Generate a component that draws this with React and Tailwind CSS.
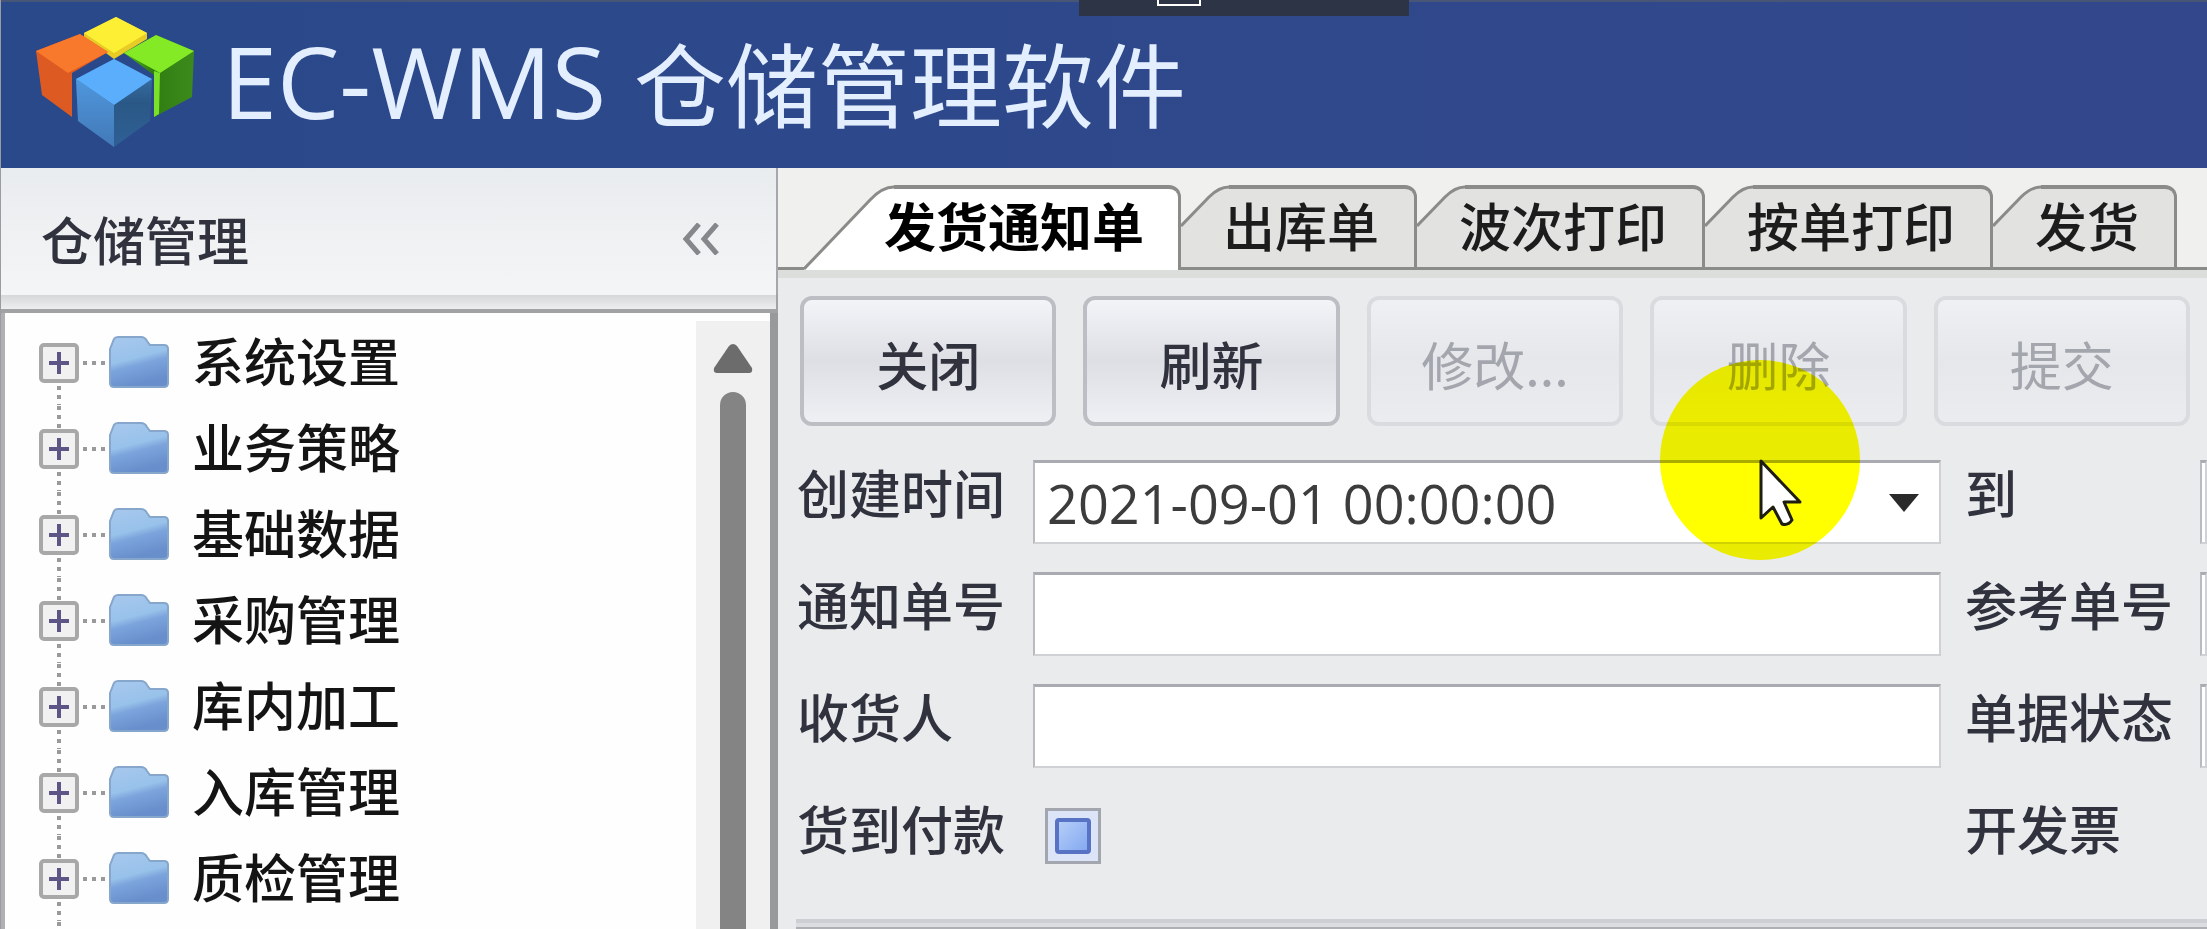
import React, { useState } from "react";

const MENU = ["系统设置", "业务策略", "基础数据", "采购管理", "库内加工", "入库管理", "质检管理"];
const TABS = ["发货通知单", "出库单", "波次打印", "按单打印", "发货"];
const ACTIONS = [
    { label: "关闭", enabled: true },
    { label: "刷新", enabled: true },
    { label: "修改...", enabled: false },
    { label: "删除", enabled: false },
    { label: "提交", enabled: false },
];

function Logo() {
    return (
        <svg className="w-[164px] h-[140px] shrink-0" viewBox="0 0 164 140" aria-hidden="true">
            <defs>
                <linearGradient id="blueLeft" x1="0" y1="0" x2="0" y2="1">
                    <stop offset="0" stopColor="#4f97dc"/>
                    <stop offset="1" stopColor="#4279b8"/>
                </linearGradient>
                <linearGradient id="blueRight" x1="0" y1="0" x2="0" y2="1">
                    <stop offset="0" stopColor="#3f7cb6"/>
                    <stop offset="0.5" stopColor="#2a5886"/>
                    <stop offset="1" stopColor="#2f5f96"/>
                </linearGradient>
                <linearGradient id="greenSide" x1="0" y1="0" x2="1" y2="0">
                    <stop offset="0" stopColor="#58b81c"/>
                    <stop offset="0.4" stopColor="#2f7d12"/>
                    <stop offset="1" stopColor="#3d8a1c"/>
                </linearGradient>
            </defs>
            <path d="M50 18 L82 2 L113 18 L113 24 L80 44 L50 22 Z" fill="#e8cc26"/>
            <path d="M50 18 L82 2 L113 18 L80 38 Z" fill="#fdf034"/>
            <path d="M2 36 L46 19 L74 37 L38 58 L38 102 L8 80 Z" fill="#dd5a22"/>
            <path d="M2 36 L46 19 L74 37 L34 58 Z" fill="#f8782c"/>
            <path d="M90 38 L122 20 L160 36 L158 82 L120 102 L120 60 Z" fill="url(#greenSide)"/>
            <path d="M90 38 L122 20 L160 36 L126 58 Z" fill="#84ea26"/>
            <path d="M120 56 L126 58 L125 99 L120 102 Z" fill="#7be02a"/>
            <path d="M42 64 L80 44 L118 64 L116 106 L80 132 L44 106 Z" fill="url(#blueRight)"/>
            <path d="M42 64 L80 90 L80 132 L44 106 Z" fill="url(#blueLeft)"/>
            <path d="M42 64 L80 44 L118 64 L80 90 Z" fill="#5aaefc"/>
        </svg>
    )
}

function Branch({ first }) {
    return (
        <svg className="w-[70px] h-[86px]" viewBox="0 0 70 86" aria-hidden="true">
            { !first && <path d="M21 1 V24" stroke="#9a9a9a" strokeWidth="4" strokeDasharray="4 5"/> }
            <path d="M21 67 V86" stroke="#9a9a9a" strokeWidth="4" strokeDasharray="4 5"/>
            <path d="M45 44 H67" stroke="#9a9a9a" strokeWidth="4" strokeDasharray="4 5"/>
            <rect x="3" y="26" width="36" height="36" rx="3" fill="#f2f1f2" stroke="#a9a8a8" strokeWidth="4"/>
            <path d="M11 44 H31 M21 33 V55" stroke="#5d5585" strokeWidth="4"/>
        </svg>
    )
}

function Folder() {
    return (
        <svg className="w-[62px] h-[54px] shrink-0" viewBox="0 0 62 54" aria-hidden="true">
            <defs>
                <linearGradient id="folder" x1="0" y1="0" x2="0.3" y2="1">
                    <stop offset="0" stopColor="#a8c8ee"/>
                    <stop offset="0.5" stopColor="#98c2ea"/>
                    <stop offset="0.65" stopColor="#7ba3dc"/>
                    <stop offset="1" stopColor="#688fcb"/>
                </linearGradient>
            </defs>
            <path d="M2 14 L6 4 Q7 2 10 2 H33 Q37 2 39 6 L42 10 H56 Q60 10 60 14 V48 Q60 52 56 52 H6 Q2 52 2 48 Z" fill="url(#folder)" stroke="#86a6cc" strokeWidth="2"/>
        </svg>
    )
}

function Tab({ label, active, onClick }) {
    if (active) {
        return (
            <button role="tab" aria-selected="true" className="flex shrink-0 h-[88px] -mb-[3px]" onClick={ onClick }>
                <svg className="w-[90px] h-[88px]" viewBox="0 0 90 88" aria-hidden="true">
                    <path d="M0 88 V83 L68 14 L90 1 V88 Z" fill="#f0f0ef"/>
                    <path d="M0 88 L1 84 L67 15 Q80 2 90 2 V88 Z" fill="#fff"/>
                    <path d="M0 84 L66 15 Q78 2 90 2" fill="none" stroke="#8b8b89" strokeWidth="3"/>
                </svg>
                <span className="flex h-full border-t-4 border-r-[3px] border-[#8b8b89] rounded-tr-xl bg-white pr-[34px]">
                    <span className="relative -ml-[10px] leading-[72px] font-bold text-black">{ label }</span>
                </span>
            </button>
        )
    }
    return (
        <button role="tab" aria-selected="false" className="flex shrink-0 h-[85px] border-b-[3px] border-[#8b8b89]" onClick={ onClick }>
            <svg className="w-12 h-full" viewBox="0 0 48 82" aria-hidden="true">
                <path d="M0 41 L28 12 Q38 2 48 2 V82 H0 Z" fill="#e2e3e1"/>
                <path d="M0 41 L28 12 Q38 2 48 2" fill="none" stroke="#8b8b89" strokeWidth="3"/>
            </svg>
            <span className="flex h-full border-t-4 border-r-[3px] border-[#8b8b89] rounded-tr-xl bg-[#e2e3e1] pr-[35px]">
                <span className="relative -ml-[6px] leading-[72px] text-[#1c1c1c]">{ label }</span>
            </span>
        </button>
    )
}

function Field({ id, label, className }) {
    return (
        <>
            <label htmlFor={ id } className={ `leading-[64px] ${ className || "" }` }>{ label }</label>
            <input id={ id } type="text" className="w-full min-w-0 h-[84px] bg-white border-2 border-t-[3px] border-[#cfd1d4] border-t-[#a9abb0] border-l-[#b9bbc0] outline-none"/>
        </>
    )
}

function Pointer() {
    return (
        <>
            <div className="absolute left-[1659px] top-[360px] w-[200px] h-[200px] pointer-events-none mix-blend-multiply rounded-full bg-[#ffff00]"/>
            <svg className="absolute left-[1758px] top-[458px] w-[44px] h-[70px] pointer-events-none" viewBox="0 0 44 70" aria-hidden="true">
                <path d="M2 3 V60 L14 49 L23 66 Q29 68 33 62 L25 44 H41 Z" fill="#fff" stroke="#1d1d10" strokeWidth="3" strokeLinejoin="round"/>
            </svg>
        </>
    )
}

export default function App() {
    const [tab, setTab] = useState(0);
    const [created, setCreated] = useState("2021-09-01 00:00:00");

    return (
        <div className="relative h-screen flex flex-col overflow-hidden bg-[#e9ebed] border-l border-[#9a9ca4] text-[52px] font-medium text-[#30323e] font-['Noto_Sans_CJK_SC',sans-serif]">
            <header className="flex items-center shrink-0 h-[168px] pl-[33px] border-t-2 border-[#475577] bg-linear-to-r from-[#29498a] to-[#33488c]">
                <Logo/>
                <h1 className="flex items-center gap-7 ml-6 pb-2 leading-[120px] whitespace-nowrap font-normal text-[#e3efff]">
                    <span className="text-[99px] font-['Open_Sans',sans-serif]">EC-WMS</span>
                    <span className="text-[92px]">仓储管理软件</span>
                </h1>
            </header>

            <div className="flex flex-1 min-h-0">
                <aside className="flex flex-col shrink-0 w-[777px]">
                    <div className="flex items-center justify-between shrink-0 h-[127px] pl-10 pr-[54px] pt-3.5 border-r-2 border-[#a5a7aa] bg-linear-to-b from-[#e9ecee] to-[#f4f5f7]">
                        <h2>仓储管理</h2>
                        <button aria-label="收起">
                            <svg className="w-[42px] h-8" viewBox="0 0 42 32" fill="none" stroke="#85878b" strokeWidth="5" aria-hidden="true">
                                <path d="M19 1 L6 16 L19 31 M37 1 L24 16 L37 31"/>
                            </svg>
                        </button>
                    </div>
                    <div className="shrink-0 h-[18px] border-r-2 border-b-[4px] border-[#a0a2a4] bg-linear-to-b from-[#d5d7d9] to-[#eceeef]"/>
                    <div className="flex flex-1 min-h-0 border-l-4 border-r-8 border-l-[#b0b0b2] border-r-[#98999b] bg-[#fefefe]">
                        <ul className="flex-1 pt-1.5 pl-[33px] text-[#141414]">
                            { MENU.map((name, i) => (
                                <li key={ name } className="flex items-center h-[86px]">
                                    <button aria-label={ `展开${ name }` }><Branch first={ i === 0 }/></button>
                                    <Folder/>
                                    <a href="#" className="ml-[22px] pb-1 leading-[82px]">{ name }</a>
                                </li>
                            )) }
                            <li className="h-[86px]"><Branch/></li>
                        </ul>
                        <div className="flex flex-col items-center shrink-0 w-[74px] mt-2 bg-[#f0f0f0]">
                            <svg className="w-[42px] h-[30px] mt-[22px]" viewBox="0 0 42 30" aria-hidden="true">
                                <path d="M17 3 Q21 -1 25 3 L40 25 Q41 30 37 30 H5 Q1 30 2 25 Z" fill="#6c6c6c"/>
                            </svg>
                            <div className="w-[26px] flex-1 mt-[19px] rounded-t-full bg-[#848484]"/>
                        </div>
                    </div>
                </aside>

                <main className="flex flex-col flex-1 min-w-0">
                    <div role="tablist" className="flex shrink-0 pt-[17px] bg-[#f0f0ef]">
                        <div className="w-[26px] shrink-0 border-b-[3px] border-[#8b8b89]"/>
                        { TABS.map((name, i) => <Tab key={ name } label={ name } active={ tab === i } onClick={ () => setTab(i) }/>) }
                        <div className="flex-1 border-b-[3px] border-[#8b8b89]"/>
                    </div>
                    <div className="shrink-0 h-2 bg-[#dcdedc]"/>

                    <div className="flex gap-[27px] mt-[18px] pl-[22px] pr-[17px]">
                        { ACTIONS.map(({ label, enabled }) => (
                            <button
                                key={ label }
                                disabled={ !enabled }
                                className="flex-1 h-[130px] pt-1.5 rounded-xl border-4 border-[#bcbec3] bg-linear-to-b from-[#f3f4f8] via-[#dedfe4] to-[#eff0f4] disabled:border-[#d9dbdf] disabled:from-[#eff0f4] disabled:via-[#e6e7eb] disabled:to-[#ebecf0] disabled:font-normal disabled:text-[#a4a6ae]"
                            >
                                { label }
                            </button>
                        )) }
                    </div>

                    <form className="grid grid-cols-[236px_1fr_259px_7px] gap-y-7 mt-[34px] pl-[19px]" onSubmit={ e => e.preventDefault() }>
                        <label htmlFor="from" className="leading-[64px]">创建时间</label>
                        <div className="flex items-center h-[84px] pl-3 bg-white border-2 border-t-[3px] border-[#cfd1d4] border-t-[#a9abb0] border-l-[#b9bbc0]">
                            <input id="from" type="text" className="flex-1 min-w-0 outline-none text-[54px] leading-[76px] font-normal text-[#3c3c3c] font-['Open_Sans',sans-serif]" value={ created } onChange={ e => setCreated(e.target.value) }/>
                            <button type="button" aria-label="选择日期" className="px-5">
                                <svg className="w-[30px] h-[18px]" viewBox="0 0 30 18" aria-hidden="true"><path d="M0 0 H30 L15 18 Z" fill="#2a2a2a"/></svg>
                            </button>
                        </div>
                        <Field id="to" label="到" className="pl-6"/>
                        <Field id="notice" label="通知单号"/>
                        <Field id="ref" label="参考单号" className="pl-6"/>
                        <Field id="receiver" label="收货人"/>
                        <Field id="status" label="单据状态" className="pl-6"/>
                        <label htmlFor="cod" className="leading-[64px]">货到付款</label>
                        <input
                            id="cod"
                            type="checkbox"
                            className="appearance-none grid place-items-center w-14 h-14 mt-3 ml-3 border-[3px] border-[#a3a6ae] bg-[#dce4f8] before:content-[''] before:w-9 before:h-9 before:border-4 before:border-[#5873c4] before:rounded-sm before:bg-linear-to-br before:from-[#b4cdf8] before:to-[#86aaf0]"
                        />
                        <span className="pl-6 leading-[64px]">开发票</span>
                    </form>

                    <div className="shrink-0 h-2.5 mt-auto ml-[18px] border-t-4 border-b-2 border-t-[#cdcfd4] border-b-[#aeb0b5] bg-[#dcdde1]"/>
                </main>
            </div>

            <div className="absolute top-0 left-[1078px] w-[330px] h-4 bg-[#2d3445]">
                <div className="w-11 h-1.5 ml-[78px] border-2 border-t-0 border-white"/>
            </div>
            <Pointer/>
        </div>
    )
}
